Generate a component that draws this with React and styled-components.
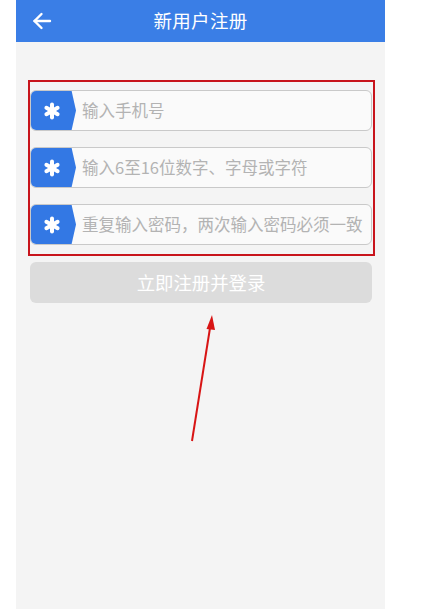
import React from 'react';
import styled, { createGlobalStyle } from 'styled-components';

const GlobalStyle = createGlobalStyle`
  html, body {
    margin: 0;
    padding: 0;
    background: #ffffff;
  }
  body {
    font-family: 'Noto Sans CJK SC', 'Noto Sans', sans-serif;
  }
`;

const Page = styled.div`
  width: 426px;
  height: 609px;
  display: flex;
  background: #ffffff;
  position: relative;
  overflow: hidden;
`;

const Screen = styled.div`
  margin-left: 16px;
  width: 369px;
  height: 609px;
  background: #f4f4f4;
  display: flex;
  flex-direction: column;
`;

const Header = styled.div`
  height: 42px;
  background: #3a7ee6;
  display: flex;
  align-items: center;
  position: relative;
`;

const BackButton = styled.button`
  background: none;
  border: none;
  padding: 0;
  margin-left: 15px;
  width: 22px;
  height: 22px;
  display: flex;
  align-items: center;
  justify-content: center;
  cursor: pointer;
`;

const Title = styled.h1`
  flex: 1;
  margin: 0 0 2px -37px;
  text-align: center;
  color: #ffffff;
  font-size: 18.5px;
  font-weight: 400;
  letter-spacing: 0.3px;
`;

const Content = styled.div`
  display: flex;
  flex-direction: column;
  padding: 38px 0 0 12px;
`;

const FieldBox = styled.div`
  width: 347px;
  box-sizing: border-box;
  border: 2px solid #c8141c;
  padding: 8px 1px 9px 0;
  display: flex;
  flex-direction: column;
  gap: 16px;
`;

const Field = styled.div`
  height: 41px;
  display: flex;
  align-items: stretch;
  background: #fafafa;
  border: 1px solid #c9c9c9;
  border-radius: 6px;
  box-sizing: border-box;
  overflow: hidden;
`;

const Tag = styled.div`
  width: 46px;
  flex-shrink: 0;
  margin: -1px 0 -1px -1px;
  background: #3378e4;
  clip-path: polygon(0 0, 90% 0, 100% 50%, 90% 100%, 0 100%);
  border-radius: 6px 0 0 6px;
  display: flex;
  align-items: center;
  justify-content: center;
  padding-right: 3px;
  box-sizing: border-box;
`;

const Input = styled.input`
  flex: 1;
  min-width: 0;
  border: none;
  outline: none;
  background: transparent;
  padding: 0 0 2px 6px;
  font-family: 'Noto Sans CJK SC', 'Noto Sans', sans-serif;
  font-size: 16.5px;
  color: #333;

  &::placeholder {
    color: #b3b3b3;
  }
`;

const SubmitButton = styled.button`
  margin: 6px 0 0 2px;
  width: 342px;
  height: 41px;
  border: none;
  border-radius: 6px;
  background: #dcdcdc;
  color: #ffffff;
  font-family: 'Noto Sans CJK SC', 'Noto Sans', sans-serif;
  font-size: 18.4px;
  padding: 0 0 2px;
`;

const ArrowMark = styled.svg`
  position: absolute;
  left: 185px;
  top: 310px;
  pointer-events: none;
`;

const Star = () => (
  <svg width="18" height="18" viewBox="0 0 18 18">
    <g stroke="#ffffff" strokeWidth="4" strokeLinecap="round">
      <line x1="9" y1="2.5" x2="9" y2="15.5" />
      <line x1="3.4" y1="5.75" x2="14.6" y2="12.25" />
      <line x1="3.4" y1="12.25" x2="14.6" y2="5.75" />
    </g>
  </svg>
);

const fields = [
  { placeholder: '输入手机号', type: 'tel' },
  { placeholder: '输入6至16位数字、字母或字符', type: 'password' },
  { placeholder: '重复输入密码，两次输入密码必须一致', type: 'password' },
];

export default function App() {
  return (
    <>
      <GlobalStyle />
      <Page>
        <Screen>
          <Header>
            <BackButton aria-label="返回">
              <svg width="20" height="18" viewBox="0 0 20 18">
                <g fill="none" stroke="#ffffff" strokeWidth="2.4" strokeLinecap="round" strokeLinejoin="round">
                  <line x1="2.5" y1="9" x2="18" y2="9" />
                  <polyline points="9.5,2 2.5,9 9.5,16" />
                </g>
              </svg>
            </BackButton>
            <Title>新用户注册</Title>
          </Header>

          <Content>
            <FieldBox>
              {fields.map((f, i) => (
                <Field key={i}>
                  <Tag>
                    <Star />
                  </Tag>
                  <Input type={f.type} placeholder={f.placeholder} />
                </Field>
              ))}
            </FieldBox>
            <SubmitButton>立即注册并登录</SubmitButton>
          </Content>
        </Screen>

        <ArrowMark width="40" height="140" viewBox="0 0 40 140">
          <line x1="7" y1="131" x2="25" y2="18" stroke="#d81414" strokeWidth="2" />
          <polygon points="27,5 21.5,19 30,20" fill="#d81414" />
        </ArrowMark>
      </Page>
    </>
  );
}
